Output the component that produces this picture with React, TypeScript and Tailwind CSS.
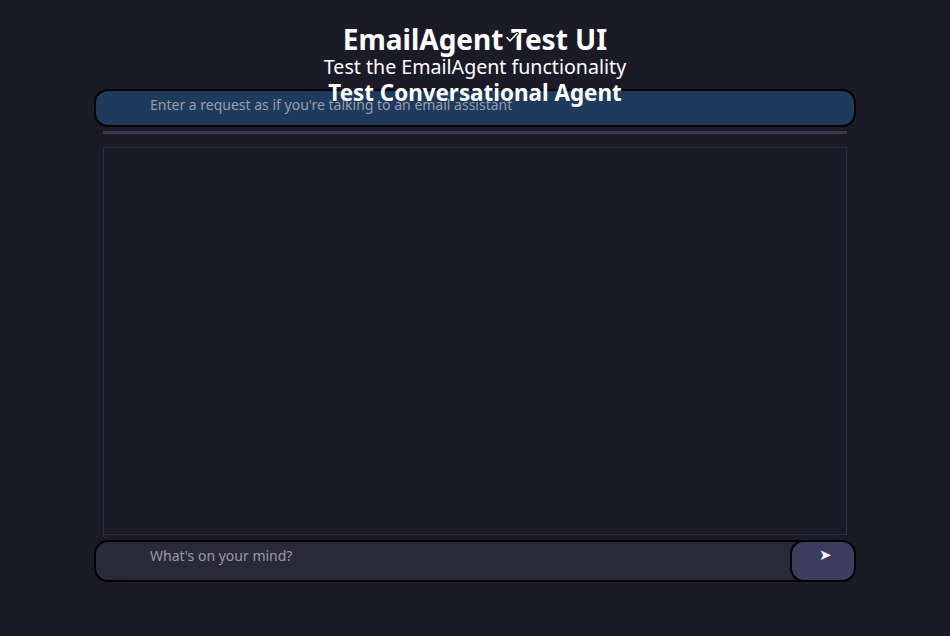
import React from "react";

export default function App() {
  return (
    <div
      className="w-full min-h-[636px] bg-[#1b1b28] text-white"
      style={{ fontFamily: '"Noto Sans", "Open Sans", sans-serif' }}
    >
      <div className="w-[762px] mx-auto flex flex-col pt-[21px]">
        <div className="relative flex flex-col items-center">
          <h1 className="text-[28px] leading-[36px] font-bold text-white">EmailAgent Test UI</h1>
          <svg
            className="absolute left-[411px] top-[10px]"
            width="14"
            height="13"
            viewBox="0 0 14 13"
          >
            <path d="M2 6.5 L5 10 L12 2.5" fill="none" stroke="#111" strokeWidth="3.5" strokeLinecap="round" strokeLinejoin="round" />
            <path d="M2 6.5 L5 10 L12 2.5" fill="none" stroke="#fff" strokeWidth="1.6" strokeLinecap="round" strokeLinejoin="round" />
          </svg>
          <p className="text-[19.6px] leading-[22px] text-white -mt-[1px]">Test the EmailAgent functionality</p>
          <h2 className="relative z-10 text-[22.4px] leading-[28px] font-bold text-white mt-[1px]">
            Test Conversational Agent
          </h2>
        </div>
        <div className="-mt-[18px] h-[38px] rounded-[14px] border-2 border-black bg-[#1e3a5c] flex items-center">
          <input
            className="w-full bg-transparent outline-none pl-[54px] pb-[8px] text-[14px] text-[#c8c8d0] placeholder:text-[#9a9eab]"
            placeholder="Enter a request as if you're talking to an email assistant"
          />
        </div>
        <div className="mx-[9px] mt-[4px] h-[3px] bg-[#3b3850]" />
        <div className="mx-[9px] mt-[13px] h-[388px] border border-[#2f2e3d] bg-[#1b1b28]" />
        <div className="mt-[5px] flex h-[42px]">
          <div className="flex-1 -mr-[12px] rounded-l-[14px] border-2 border-black bg-[#2a2937] flex items-center">
            <input
              className="w-full bg-transparent outline-none pl-[54px] pb-[12px] text-[14px] text-[#c8c8d0] placeholder:text-[#9a9aa6]"
              placeholder="What's on your mind?"
            />
          </div>
          <button className="relative w-[66px] rounded-[14px] border-2 border-black bg-[#3e3c5e] text-white text-[15px] flex justify-center pt-[1px] pl-[4px]">
            ➤
          </button>
        </div>
      </div>
    </div>
  );
}
